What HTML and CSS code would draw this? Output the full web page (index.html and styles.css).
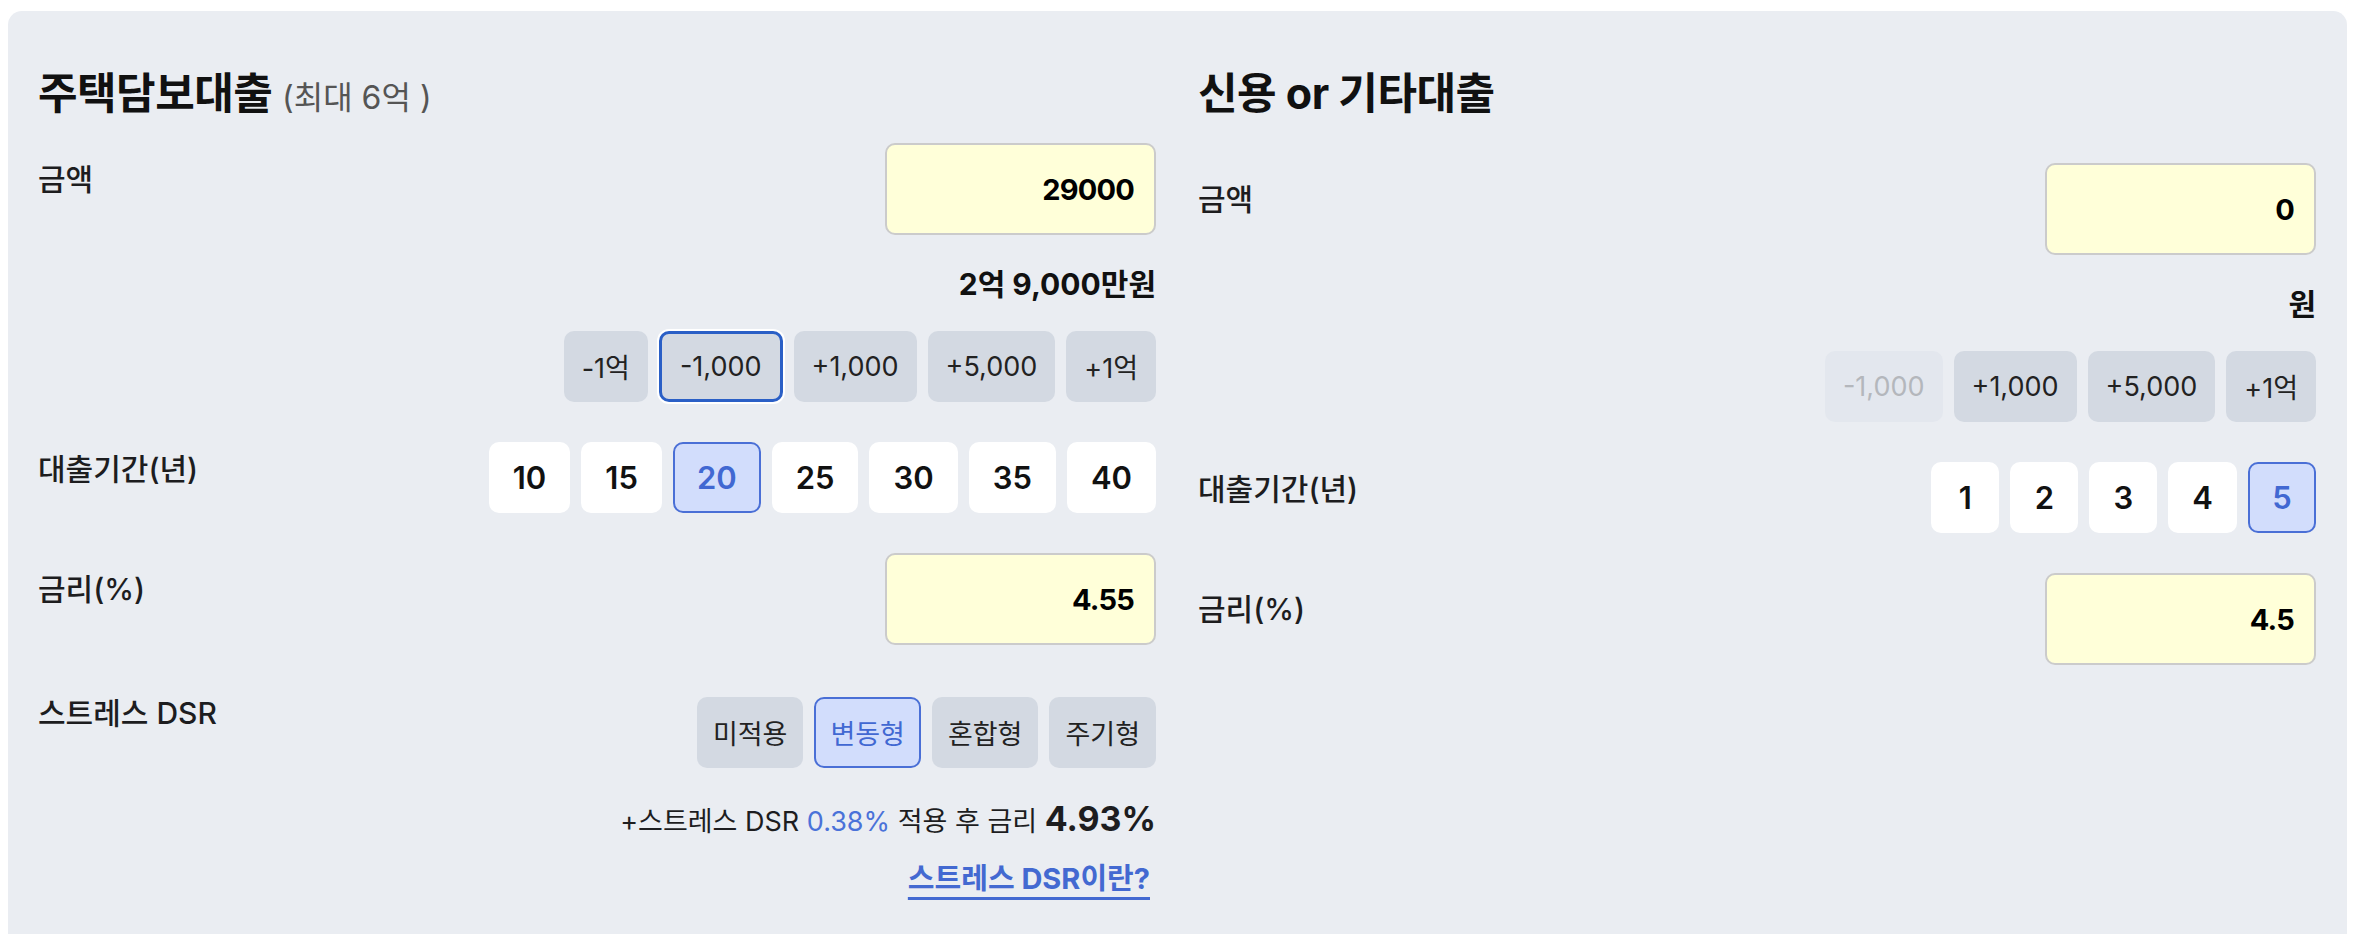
FILE: index.html
```html
<!DOCTYPE html>
<html lang="ko">
<head>
    <meta charset="UTF-8">
    <meta name="viewport" content="width=device-width, initial-scale=1.0">
    <title>대출 계산기</title>
    <link rel="stylesheet" href="styles.css">
</head>
<body>
    <div class="calc">
        <!-- 주택담보대출 -->
        <section class="panel">
            <h2 class="panel-title">주택담보대출 <span class="limit">(최대 6억 )</span></h2>

            <div class="field field-first">
                <label class="field-label pt-lg">금액</label>
                <div class="control">
                    <input class="num-input" type="text" value="29000">
                    <div class="amount-text">2억 9,000만원</div>
                    <div class="btn-group">
                        <button class="btn">-1억</button>
                        <button class="btn btn-focus">-1,000</button>
                        <button class="btn">+1,000</button>
                        <button class="btn">+5,000</button>
                        <button class="btn">+1억</button>
                    </div>
                </div>
            </div>

            <div class="field">
                <label class="field-label pt-sm">대출기간(년)</label>
                <div class="btn-group">
                    <button class="year">10</button>
                    <button class="year">15</button>
                    <button class="year selected">20</button>
                    <button class="year">25</button>
                    <button class="year">30</button>
                    <button class="year">35</button>
                    <button class="year">40</button>
                </div>
            </div>

            <div class="field">
                <label class="field-label pt-lg">금리(%)</label>
                <input class="num-input" type="text" value="4.55">
            </div>

            <div class="field field-dsr">
                <label class="field-label pt-neg">스트레스 DSR</label>
                <div class="control">
                    <div class="btn-group">
                        <button class="btn btn-type">미적용</button>
                        <button class="btn btn-type selected">변동형</button>
                        <button class="btn btn-type">혼합형</button>
                        <button class="btn btn-type">주기형</button>
                    </div>
                    <div class="dsr-summary">+스트레스 DSR <span class="dsr-rate">0.38%</span> 적용 후 금리 <strong class="final-rate">4.93%</strong></div>
                    <a class="dsr-link" href="#">스트레스 DSR이란?</a>
                </div>
            </div>
        </section>

        <!-- 신용 or 기타대출 -->
        <section class="panel">
            <h2 class="panel-title">신용 or 기타대출</h2>

            <div class="field field-first field-first-right">
                <label class="field-label pt-lg">금액</label>
                <div class="control">
                    <input class="num-input" type="text" value="0">
                    <div class="amount-text">원</div>
                    <div class="btn-group">
                        <button class="btn" disabled>-1,000</button>
                        <button class="btn">+1,000</button>
                        <button class="btn">+5,000</button>
                        <button class="btn">+1억</button>
                    </div>
                </div>
            </div>

            <div class="field">
                <label class="field-label pt-sm">대출기간(년)</label>
                <div class="btn-group">
                    <button class="year">1</button>
                    <button class="year">2</button>
                    <button class="year">3</button>
                    <button class="year">4</button>
                    <button class="year selected">5</button>
                </div>
            </div>

            <div class="field">
                <label class="field-label pt-lg">금리(%)</label>
                <input class="num-input" type="text" value="4.5">
            </div>
        </section>
    </div>
</body>
</html>
```

FILE: styles.css
```css
body { margin: 8px 8px 0; overflow: hidden; font-family: Inter, "Noto Sans CJK KR", sans-serif; color: #1d1d1f; background: #fff; }
.calc { margin: 3px 3px 0 0; height: 960px; box-sizing: border-box; padding: 56px 31px 0 30px; background: #eaedf2; border-radius: 14px; display: grid; grid-template-columns: 1fr 1fr; column-gap: 42px; align-items: start; }

.panel-title { margin: 0; font-size: 43px; line-height: 52px; font-weight: 700; color: #111; letter-spacing: -0.5px; }
.limit { font-size: 32px; font-weight: 400; color: #555; letter-spacing: 0; }

.field { display: flex; justify-content: space-between; align-items: flex-start; margin-top: 40px; }
.field-first { margin-top: 19px; }
.field-first-right { margin-top: 44px; }
.field-dsr { margin-top: 52px; }
.field-label { font-size: 30px; line-height: 40px; font-weight: 500; }
.pt-lg { padding-top: 16px; }
.pt-sm { padding-top: 7px; }
.pt-neg { margin-top: -4px; }

.control { display: flex; flex-direction: column; align-items: flex-end; }

.num-input { display: block; box-sizing: border-box; width: 271px; height: 92px; padding: 0 20px; border: 2px solid #cbcbcb; border-radius: 10px; background: #ffffd9; font-family: inherit; font-size: 29px; letter-spacing: -0.8px; font-weight: 700; color: #000; text-align: right; }

.amount-text { margin-top: 29px; font-size: 30px; line-height: 40px; font-weight: 700; color: #111; }
.amount-text + .btn-group { margin-top: 27px; }

.btn-group { display: flex; gap: 11px; }
.btn { height: 71px; padding: 0 18px; border: none; border-radius: 10px; background: #d3d9e2; font-family: inherit; font-size: 27px; color: #222; cursor: pointer; }
.btn-type { padding: 0 14px; border: 2px solid transparent; }
.btn-focus { border: 3px solid #2a5fc6; box-shadow: 0 0 0 2px #fff; }
.btn:disabled { background: #e3e7ee; color: #b4b7bc; cursor: default; }
.btn.selected { background: #d2ddfc; border-color: #4a6fd6; color: #4168d2; }

.year { height: 71px; min-width: 68px; padding: 0 22px; border: 2px solid transparent; border-radius: 10px; background: #fff; font-family: inherit; font-size: 31px; font-weight: 600; color: #111; cursor: pointer; }
.year.selected { background: #d2ddfc; border-color: #4a6fd6; color: #4168d2; }

.dsr-summary { margin-top: 34px; font-size: 27px; line-height: 38px; color: #1d1d1f; }
.dsr-rate { color: #4a72d9; }
.final-rate { font-size: 34px; line-height: 1; font-weight: 700; }
.dsr-link { margin-top: 19px; margin-right: 6px; font-size: 29px; line-height: 38px; font-weight: 700; color: #4369d1; text-decoration: underline; text-decoration-thickness: 3px; text-underline-offset: 8px; }
```
